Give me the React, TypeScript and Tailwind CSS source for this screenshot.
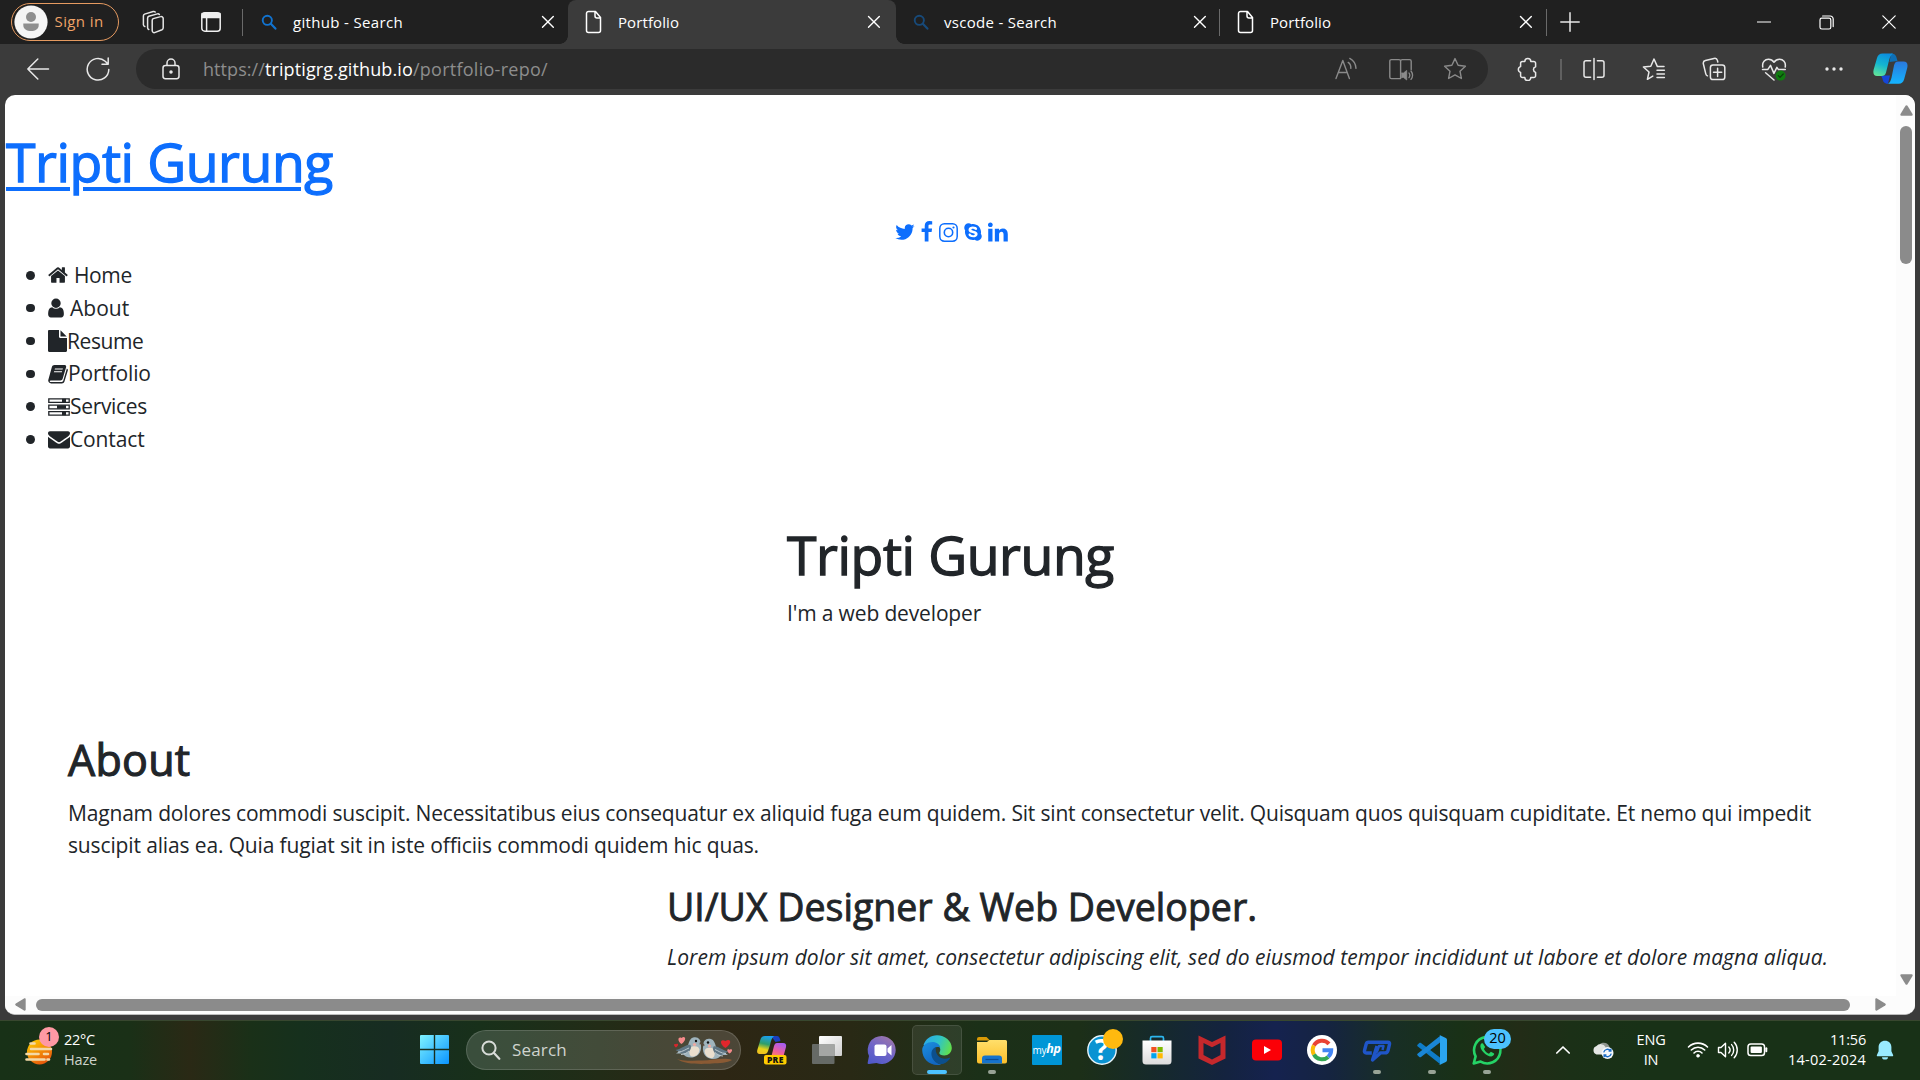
import React from "react";
import { FaSkype } from "react-icons/fa";

type P = { children: React.ReactNode; w?: number; h?: number; vb?: string; className?: string };

function Line({ children, w = 24, h = 24, vb, className = "" }: P) {
  return (
    <svg
      width={w}
      height={h}
      viewBox={vb ?? `0 0 ${w} ${h}`}
      fill="none"
      stroke="currentColor"
      strokeWidth={1.5}
      strokeLinecap="round"
      strokeLinejoin="round"
      className={`block shrink-0 ${className}`}
    >
      {children}
    </svg>
  );
}

function Fill({ children, w = 22, h = 22, vb = "0 0 1792 1792", className = "" }: P) {
  return (
    <svg width={w} height={h} viewBox={vb} fill="currentColor" className={`block shrink-0 ${className}`}>
      {children}
    </svg>
  );
}

/* ---------- Tab strip ---------- */

function Magnifier({ className }: { className: string }) {
  return (
    <Line w={16} h={16} className={className}>
      <circle cx="6.3" cy="6.3" r="4.6" strokeWidth="1.9" />
      <path d="M9.8 9.8 14.4 14.6" strokeWidth="2.2" />
    </Line>
  );
}

function PageIcon() {
  return (
    <Line w={18} h={24} className="text-white">
      <path d="M3.5 1.5h7l5 6v13a2 2 0 0 1-2 2h-10a2 2 0 0 1-2-2v-17a2 2 0 0 1 2-2zM10 1.5v4.6a2 2 0 0 0 2 2h3.5" />
    </Line>
  );
}

function CloseX() {
  return (
    <Line w={14} h={14} className="text-white">
      <path d="M1.5 1.5 12.3 12.3M12.3 1.5 1.5 12.3" strokeWidth="1.4" />
    </Line>
  );
}

function TabStrip() {
  return (
    <div className="flex h-[44px] items-center bg-[#202020] text-[15px] text-white">
      <div className="ml-[11px] mb-px flex h-[38px] w-[108px] shrink-0 items-center rounded-full border-[1.5px] border-[#e59a60] pl-[1.5px]">
        <svg width="34" height="34" viewBox="0 0 34 34" className="block shrink-0">
          <circle cx="17" cy="17" r="16.6" fill="#f5f5f5" />
          <circle cx="17" cy="12" r="5" fill="#8f8f8f" />
          <path d="M9.3 18.5h15.4v1.6c0 4-3.4 6-7.7 6s-7.7-2-7.7-6z" fill="#8f8f8f" />
        </svg>
        <span className="ml-[7px] tracking-[0.027em] whitespace-nowrap text-[#f0a368]">Sign in</span>
      </div>
      <Line w={24} h={24} className="ml-[23px] text-[#e6e6e6]">
        <path d="M11.2 8.6 18.6 6.6a2 2 0 0 1 2.6 1.8v9.4a2 2 0 0 1-1.2 1.9l-7.4 2.9a2 2 0 0 1-2.4-1.8v-10.4a2 2 0 0 1 1-1.8z" />
        <path d="M6.8 19.5a2 2 0 0 1-1.2-1.8V8.2a2 2 0 0 1 1.2-1.9l8.6-2.4a2 2 0 0 1 2 .6" />
        <path d="M2.8 16.5a2 2 0 0 1-1.4-1.8V6a2 2 0 0 1 1.2-1.9l8.6-2.6a2 2 0 0 1 2 .5" />
      </Line>
      <Line w={22} h={22} className="ml-[34px] text-[#f0f0f0]">
        <rect x="1.8" y="1.8" width="18.4" height="18.4" rx="3" />
        <path d="M2 2.5h18v4H2z" fill="currentColor" />
        <path d="M6.6 7v13" />
      </Line>
      <div className="ml-[20px] h-[27px] w-px bg-[#6a6a6a]" />
      <Magnifier className="ml-[18px] text-[#1173d0]" />
      <span className="ml-[16px] w-[248px] shrink-0 tracking-[0.022em] whitespace-nowrap">github - Search</span>
      <CloseX />

      <div className="relative ml-[13px] flex h-[44px] w-[328px] shrink-0 items-center rounded-t-[8px] bg-[#3b3b3b] before:absolute before:bottom-0 before:-left-[8px] before:size-[8px] before:bg-[radial-gradient(circle_at_0_0,#202020_7.5px,#3b3b3b_8px)] after:absolute after:bottom-0 after:-right-[8px] after:size-[8px] after:bg-[radial-gradient(circle_at_100%_0,#202020_7.5px,#3b3b3b_8px)]">
        <div className="ml-[17px]"><PageIcon /></div>
        <span className="ml-[15px] w-[249px] shrink-0 tracking-[0.006em]">Portfolio</span>
        <CloseX />
      </div>

      <Magnifier className="ml-[17px] text-[#174a7a]" />
      <span className="ml-[15px] w-[249px] shrink-0 tracking-[0.02em] whitespace-nowrap">vscode - Search</span>
      <CloseX />
      <div className="ml-[12px] h-[27px] w-px bg-[#6a6a6a]" />
      <div className="ml-[17px]"><PageIcon /></div>
      <span className="ml-[15px] w-[249px] shrink-0 tracking-[0.006em]">Portfolio</span>
      <CloseX />
      <div className="ml-[13px] h-[27px] w-px bg-[#6a6a6a]" />
      <Line w={20} h={20} className="ml-[13px] text-[#e8e8e8]">
        <path d="M10 .8v18.4M.8 10h18.4" />
      </Line>
      <div className="ml-auto grid w-[187px] shrink-0 grid-cols-3 place-items-center text-white">
        <Line w={14} h={14}><path d="M.5 7h13" strokeWidth="1.2" /></Line>
        <Line w={15} h={15}>
          <rect x="1" y="3.2" width="10.8" height="10.8" rx="1.8" strokeWidth="1.2" />
          <path d="M3.6 1h7.6a3 3 0 0 1 3 3v7.6" strokeWidth="1.2" />
        </Line>
        <Line w={14} h={14}><path d="M.8.8l12.4 12.4M13.2.8.8 13.2" strokeWidth="1.2" /></Line>
      </div>
    </div>
  );
}

/* ---------- Address bar ---------- */

function Cell({ children, className = "w-[60px]" }: { children: React.ReactNode; className?: string }) {
  return <div className={`flex shrink-0 items-center justify-center ${className}`}>{children}</div>;
}

const star = "M12 1.6 15.1 8.3l7.3.9-5.4 5 1.4 7.3L12 17.9l-6.4 3.6L7 14.2l-5.4-5 7.3-.9z";

function Toolbar() {
  return (
    <div className="flex h-[51px] items-center bg-[#3b3b3b] pb-px text-[#e8e8e8]">
      <Line w={24} h={24} className="ml-[26px]"><path d="M22.5 12H1.8M11.8 2 1.8 12l10 10" /></Line>
      <Line w={24} h={24} className="ml-[36px]"><path d="M22.8 12.4a10.8 10.8 0 1 1-3.6-8.2l2.6 2.6M22.2 1v6.2h-6.2" /></Line>
      <div className="ml-[26px] flex h-[40px] w-[1352px] shrink-0 items-center rounded-full bg-[#2b2b2b]">
        <Line w={18} h={22} className="ml-[26px]">
          <rect x="1" y="7.5" width="16" height="13.2" rx="2.4" />
          <path d="M5 7.3V5a4 4 0 0 1 8 0v2.3" />
          <circle cx="9" cy="14" r="1" fill="currentColor" />
        </Line>
        <div className="ml-[23px] flex text-[18px] whitespace-nowrap text-[#8d8d8d]">
          <span className="tracking-[0.004em]">https://</span>
          <span className="tracking-[0.006em] text-white">triptigrg.github.io</span>
          <span className="tracking-[0.015em]">/portfolio-repo/</span>
        </div>
        <div className="ml-auto flex pr-[7px] text-[#8a8a8a]">
          <Cell className="w-[54px]">
            <Line><path d="M2 21.5 8.8 3.5l6.6 18M4.4 15.5h8.8M14.2 5.4a6.5 6.5 0 0 1 2.6 6M15.8 1.4a12 12 0 0 1 6.2 10" strokeWidth="1.4" /></Line>
          </Cell>
          <Cell className="w-[55px]">
            <Line w={26}>
              <path d="M12.6 21.6H3.4a1.6 1.6 0 0 1-1.6-1.6V4.2a1.6 1.6 0 0 1 1.6-1.6h7.6a1.6 1.6 0 0 1 1.6 1.6v17.4M12.6 4.2a1.6 1.6 0 0 1 1.6-1.6h7.4a1.6 1.6 0 0 1 1.6 1.6v8.4" strokeWidth="1.4" />
              <path d="M13.5 16h2l3.2-2.6v9.6l-3.2-2.6h-2z" fill="currentColor" strokeWidth=".8" />
              <path d="M21 16a4 4 0 0 1 0 4.6M23 14a7 7 0 0 1 0 8.4" strokeWidth="1.3" />
            </Line>
          </Cell>
          <Cell className="w-[53px]"><Line><path d={star} strokeWidth="1.4" /></Line></Cell>
        </div>
      </div>
      <Cell className="ml-[10px] w-[60px]">
        <Line><path d="M8 4.4h.8a3 3 0 0 1 6 0h3a1.800 1.800 0 0 1 1.800 1.800v3.600a2.900 2.900 0 0 0 0 5.600v3.400a1.800 1.800 0 0 1-1.800 1.800h-3a3 3 0 0 1-6 0H6.400a1.800 1.800 0 0 1-1.800-1.800V15.400a3 3 0 0 1 0-5.800V6.200a1.800 1.800 0 0 1 1.800-1.800z" /></Line>
      </Cell>
      <div className="ml-[2px] h-[21px] w-[1.5px] bg-[#606060]" />
      <Cell className="ml-[2px] w-[60px]">
        <Line><path d="M8.6 3.8H4a2 2 0 0 0-2 2v12.4a2 2 0 0 0 2 2h4.6M15.4 3.8H20a2 2 0 0 1 2 2v12.4a2 2 0 0 1-2 2h-4.6M12 1.4v21.2" /></Line>
      </Cell>
      <Cell><Line><path d="M22 9.6h-6.6L12 2 8.8 9.2 1.4 10l5.6 5-1.6 7.3 5.4-3.2M15 13.2h7.4M15 17h7.4M15 20.6h7.4" /></Line></Cell>
      <Cell>
        <Line>
          <rect x="8.4" y="8" width="14.4" height="14.6" rx="2.6" />
          <path d="M15.6 11.2v8.2M11.5 15.3h8.2M5.4 18.8a3 3 0 0 1-1.6-2L1.4 7a2.8 2.8 0 0 1 2-3.4L12 1.4a2.8 2.8 0 0 1 3.4 2l.4 1.6" />
        </Line>
      </Cell>
      <Cell>
        <Line w={26}>
          <path d="M1.800 10c-1-5 2.400-7.800 5.600-7.800 2.400 0 4.200 1 5.600 3 1.400-2 3.200-3 5.600-3 3.200 0 6.600 2.800 5.600 7.800M1.500 12.400h5.400l2.600-4 3.400 8 3-6 1.400 2h7M4.600 15.800 13 23" />
          <circle cx="19.600" cy="18.600" r="5" fill="#107c10" stroke="none" />
          <path d="m17.300 18.700 1.700 1.700 3.200-3.400" stroke="#0a3d0a" strokeWidth="1.200" />
        </Line>
      </Cell>
      <Cell>
        <Fill w={20} h={6} vb="0 0 20 6"><circle cx="3" cy="3" r="1.700" /><circle cx="10" cy="3" r="1.700" /><circle cx="17" cy="3" r="1.700" /></Fill>
      </Cell>
      <div className="ml-[9px] -mt-px">
        <svg width="35" height="31" viewBox="0 0 35 31" className="block">
          <defs>
            <linearGradient id="cpA" x1=".6" y1="0" x2=".3" y2="1"><stop offset="0" stopColor="#0b8fe0" /><stop offset=".5" stopColor="#14b6d0" /><stop offset="1" stopColor="#5fe39a" /></linearGradient>
            <linearGradient id="cpB" x1=".5" y1="0" x2=".5" y2="1"><stop offset="0" stopColor="#2a78dd" /><stop offset="1" stopColor="#14b4ff" /></linearGradient>
          </defs>
          <path d="M8 22.500h9l-2 8.300c-4 0-5-2.500-5.500-5z" fill="#1546d8" />
          <path d="M18 .5c5 0 5.500 3.500 6.500 7.500l-8 1z" fill="#0e6fb5" />
          <path d="M9.500.500H20c-3 2-3.500 5-4.500 9l-2.500 10c-.8 2.600-2 3.500-4.500 3.500H4c-3 0-4.300-2.200-3.300-6.500L4 5C4.900 2 6.500.500 9.500.500z" fill="url(#cpA)" />
          <path d="M25 8.500h5.500c3.500 0 4.600 2.500 3.700 6.500l-3 11c-1 3.300-2.500 4.700-5.500 4.700H15c2-1.200 2.700-3 3.500-6L21 12.500c.8-2.800 1.500-4 4-4z" fill="url(#cpB)" />
        </svg>
      </div>
    </div>
  );
}

/* ---------- Web page ---------- */

const faHome = (
  <Fill w={20} vb="64 0 1664 1792" className="mr-[6px]">
    <path d="M1472 992v480q0 26-19 45t-45 19h-384v-384h-256v384h-384q-26 0-45-19t-19-45v-480q0-1 .5-3t.5-3l575-474 575 474q1 2 1 6zm223-69l-62 74q-8 9-21 11h-3q-13 0-21-7l-692-577-692 577q-12 8-24 7-13-2-21-11l-62-74q-8-10-7-23.500t11-21.500l719-599q32-26 76-26t76 26l244 204v-195q0-14 9-23t23-9h192q14 0 23 9t9 23v408l219 182q10 8 11 21.500t-7 23.500z" />
  </Fill>
);
const faUser = (
  <Fill w={16} vb="256 0 1280 1792" className="mr-[6px]">
    <path d="M1536 1399q0 109-62.500 187t-150.500 78h-854q-88 0-150.500-78t-62.500-187q0-85 8.500-160.500t31.500-152 58.500-131 94-89 134.500-34.500q131 128 313 128t313-128q76 0 134.500 34.500t94 89 58.500 131 31.500 152 8.500 160.500zm-256-887q0 159-112.500 271.500t-271.500 112.500-271.500-112.500-112.500-271.500 112.500-271.500 271.500-112.500 271.500 112.500 112.500 271.500z" />
  </Fill>
);
const faFile = (
  <Fill w={19} h={22} vb="0 0 19 22">
    <path d="M0 1.200C0 .5.500 0 1.200 0H11v6.800c0 .7.500 1.200 1.200 1.200H19v12.800c0 .7-.5 1.200-1.200 1.200H1.200C.5 22 0 21.500 0 20.800zM12.500.200 18.700 6.400h-6.200z" />
  </Fill>
);
const faBook = (
  <Fill w={20} h={20} vb="0 0 21 20">
    <path
      fillRule="evenodd"
      d="M6.800.600h10.400c1.500 0 2.200 1 1.800 2.400l-3.600 12c-.4 1.200-1.200 1.800-2.400 1.800H3c-.8 0-1.200.2-1.200.7 0 .6.700.9 1.500.9h11.200c.8 0 1.300-.4 1.500-1.200L19.800 4.200c1 .5 1.300 1.300 1 2.200l-3.500 11.400c-.4 1.300-1.500 2.100-2.700 2.100H3.300C1.300 19.900-.200 18.100.300 16.200L4 2.800C4.400 1.300 5.400.600 6.800.600zM7.300 4.200 7 5.400h8.300l.4-1.200zM6.500 7l-.4 1.200h8.400l.3-1.200z"
    />
  </Fill>
);
const faTasks = (
  <svg width="22" height="18" viewBox="0 0 22 18" className="block shrink-0" fill="none" stroke="currentColor" strokeWidth="1.300">
    <path d="M.8.800h20.400v3.600H.8zM.8 7.200h20.400v3.600H.8zM.8 13.600h20.400v3.600H.8z" />
    <path d="M14 .8h4v3.600h-4zM9 7.200h9v3.600H9zM14 13.600h4v3.600h-4z" fill="currentColor" stroke="none" />
  </svg>
);
const faEnvelope = (
  <Fill>
    <path d="M1792 710v794q0 66-47 113t-113 47h-1472q-66 0-113-47t-47-113v-794q44 49 101 87 362 246 497 345 57 42 92.500 65.500t94.500 48 110 24.500h2q51 0 110-24.500t94.500-48 92.500-65.500q170-123 498-345 57-39 100-87zm0-294q0 79-49 151t-122 123q-376 261-468 325-10 7-42.500 31t-54 38.500-52 32.500-57.500 27-50 9h-2q-23 0-50-9t-57.500-27-52-32.500-54-38.500-42.500-31q-91-64-262-182.500t-205-142.500q-62-42-117-115.500t-55-136.500q0-78 41.500-130t118.500-52h1472q65 0 112.500 47t47.500 113z" />
  </Fill>
);

function NavRow({ icon, children }: { icon: React.ReactNode; children: React.ReactNode }) {
  return (
    <li className="flex h-[32.800px] items-center">
      <span className="mr-[13.500px] size-[8.500px] rounded-full bg-[#212529]" />
      {icon}
      {children}
    </li>
  );
}

function WebPage() {
  return (
    <div className="flex h-[901px] w-[1891px] flex-col text-[21px] leading-[33px] text-[#212529]">
      <h1 className="mt-[34px] h-[66px] text-[53.500px] leading-[66px] tracking-[-0.0076em] text-[#0d6efd] [-webkit-text-stroke:1.300px_#0d6efd]">
        <span className="ml-px underline decoration-[4px] underline-offset-[5px]">Tripti Gurung</span>
      </h1>
      <div className="mt-[20px] ml-[2px] flex h-[33px] items-center justify-center text-[#0d6efd]">
        <Fill w={20} h={22} vb="80 0 1640 1792">
          <path d="M1684 408q-67 98-162 167 1 14 1 42 0 130-38 259.500t-115.500 248.500-184.500 210.500-258 146-323 54.500q-271 0-496-145 35 4 78 4 225 0 401-138-105-2-188-64.500t-114-159.500q33 5 61 5 43 0 85-11-112-23-185.500-111.500t-73.500-205.500v-4q68 38 146 41-66-44-105-115t-39-154q0-88 44-163 121 149 294.500 238.500t371.500 99.500q-8-38-8-74 0-134 94.500-228.500t228.500-94.500q140 0 236 102 109-21 205-78-37 115-142 178 93-10 186-50z" />
        </Fill>
        <Fill w={13} h={22} vb="440 0 1040 1792" className="ml-[6px]">
          <path d="M1343 12v264h-157q-86 0-116 36t-30 108v189h293l-39 296h-254v759h-306v-759h-255v-296h255v-218q0-186 104-288.500t277-102.500q147 0 228 12z" />
        </Fill>
        <Line w={19} h={19} className="ml-[5px] mt-px">
          <rect x=".8" y=".8" width="17.400" height="17.400" rx="4.600" />
          <circle cx="9.500" cy="9.500" r="4.200" strokeWidth="1.600" />
          <circle cx="14.500" cy="4.500" r="1.100" fill="currentColor" stroke="none" />
        </Line>
        <FaSkype className="mt-px ml-[5px] size-[20px]" />
        <Fill w={20} h={20} vb="130 100 1550 1550" className="ml-[5px]">
          <path d="M477 625v991h-330v-991h330zm21-306q1 73-50.500 122t-135.500 49h-2q-82 0-132-49t-50-122q0-74 51.500-122.500t134.500-48.500 133 48.500 51 122.500zm1166 729v568h-329v-530q0-105-40.500-164.500t-126.500-59.500q-63 0-105.500 34.500t-63.500 85.500q-11 30-11 81v553h-329q2-399 2-647t-1-296l-1-48h329v144h-2q20-32 41-56t56.500-52 87-43.500 114.500-15.500q171 0 275 113.500t104 332.500z" />
        </Fill>
      </div>
      <ul className="mt-[11px] ml-[21px]">
        <NavRow icon={faHome}><span className="tracking-[-0.018em]">Home</span></NavRow>
        <NavRow icon={faUser}><span>About</span></NavRow>
        <NavRow icon={faFile}><span className="tracking-[-0.020em]">Resume</span></NavRow>
        <NavRow icon={faBook}><span className="tracking-[-0.008em]">Portfolio</span></NavRow>
        <NavRow icon={faTasks}><span className="tracking-[-0.015em]">Services</span></NavRow>
        <NavRow icon={faEnvelope}><span className="tracking-[-0.006em]">Contact</span></NavRow>
      </ul>
      <div className="mt-[66.200px] ml-[782px]">
        <h1 className="text-[53.500px] leading-[66px] tracking-[-0.0076em] [-webkit-text-stroke:1.300px_#212529]">Tripti Gurung</h1>
        <p className="mt-[9px] tracking-[-0.007em]">I'm a web developer</p>
      </div>
      <section className="mt-[103px] ml-[63px]">
        <h2 className="text-[43px] leading-[53px] tracking-[0.006em] [-webkit-text-stroke:1.100px_#212529]">About</h2>
        <p className="mt-[11px] leading-[32.500px] whitespace-nowrap">
          <span className="tracking-[-0.0084em]">
            Magnam dolores commodi suscipit. Necessitatibus eius consequatur ex aliquid fuga eum quidem. Sit sint consectetur velit. Quisquam quos quisquam cupiditate. Et nemo qui impedit
          </span>
          <br />
          <span className="tracking-[-0.0064em]">suscipit alias ea. Quia fugiat sit in iste officiis commodi quidem hic quas.</span>
        </p>
        <div className="mt-[22px] ml-[599px]">
          <h3 className="text-[37.500px] leading-[46px] [-webkit-text-stroke:0.900px_#212529]">UI/UX Designer &amp; Web Developer.</h3>
          <p className="mt-[11px] tracking-[0.0035em] whitespace-nowrap italic">
            Lorem ipsum dolor sit amet, consectetur adipiscing elit, sed do eiusmod tempor incididunt ut labore et dolore magna aliqua.
          </p>
        </div>
      </section>
    </div>
  );
}

function Viewport() {
  return (
    <div className="h-[925px] bg-[#3b3b3b] px-[5px] pb-[5px]">
      <div className="flex h-[920px] flex-col overflow-hidden rounded-[10px] border-b border-[#bdbdbd] bg-white">
        <div className="flex h-[901px]">
          <WebPage />
          <div className="flex w-[19px] shrink-0 flex-col items-center bg-[#fcfcfc] pt-[10px] pl-px">
            <Fill w={13} h={11} vb="0 0 13 11" className="text-[#8b8b8b]"><path d="M5.500.8c.5-.8 1.500-.8 2 0l5 8.200c.5.900.1 1.700-.9 1.700H1.400C.4 10.700 0 9.900.5 9z" /></Fill>
            <div className="mt-[10px] h-[138px] w-[12px] rounded-full bg-[#8b8b8b]" />
            <Fill w={13} h={11} vb="0 0 13 11" className="mt-auto mb-[11px] text-[#8b8b8b]"><path d="M5.500 10.200c.5.800 1.500.8 2 0l5-8.200C13 1.100 12.600.3 11.600.3H1.400C.4.300 0 1.100.5 2z" /></Fill>
          </div>
        </div>
        <div className="flex h-[18px] items-center bg-[#fcfcfc] pb-px text-[#8b8b8b]">
          <Fill w={11} h={13} vb="0 0 11 13" className="ml-[10px]"><path d="M.8 5.500c-.8.500-.8 1.500 0 2l8.200 5c.9.500 1.700.1 1.700-.9V1.400c0-1-.8-1.400-1.700-.9z" /></Fill>
          <div className="ml-[10px] h-[12px] w-[1814px] rounded-full bg-[#8b8b8b]" />
          <Fill w={11} h={13} vb="0 0 11 13" className="ml-[25px]"><path d="M10.200 5.500c.8.500.8 1.500 0 2l-8.200 5c-.9.500-1.700.1-1.700-.9V1.400C.3.400 1.100 0 2 .5z" /></Fill>
        </div>
      </div>
    </div>
  );
}

/* ---------- Taskbar ---------- */

function Gradients() {
  return (
    <svg width="0" height="0" className="absolute">
      <defs>
        <linearGradient id="sun" x1="0" y1="0" x2=".6" y2="1"><stop offset="0" stopColor="#ffd400" /><stop offset="1" stopColor="#e8590c" /></linearGradient>
        <linearGradient id="win" gradientUnits="userSpaceOnUse" x1="0" y1="0" x2="29" y2="29"><stop offset="0" stopColor="#7ff3ff" /><stop offset="1" stopColor="#0a94ff" /></linearGradient>
        <linearGradient id="preA" x1=".6" y1="0" x2=".4" y2="1"><stop offset="0" stopColor="#1aa0f0" /><stop offset=".45" stopColor="#2f9e6a" /><stop offset=".75" stopColor="#e8d21a" /><stop offset="1" stopColor="#f0c020" /></linearGradient>
        <linearGradient id="preB" x1=".7" y1="0" x2=".3" y2="1"><stop offset="0" stopColor="#a55cf5" /><stop offset=".6" stopColor="#f0609a" /><stop offset="1" stopColor="#ff8a5c" /></linearGradient>
        <linearGradient id="chat" x1=".8" y1="0" x2=".2" y2="1"><stop offset="0" stopColor="#a077a8" /><stop offset=".5" stopColor="#7065c8" /><stop offset="1" stopColor="#5059c9" /></linearGradient>
        <linearGradient id="edgeA" x1="0" y1=".3" x2="1" y2=".6"><stop offset="0" stopColor="#2aa9e8" /><stop offset=".5" stopColor="#2fc3c8" /><stop offset="1" stopColor="#62e04a" /></linearGradient>
        <linearGradient id="edgeB" x1="0" y1="0" x2=".5" y2="1"><stop offset="0" stopColor="#1b8fe0" /><stop offset="1" stopColor="#1266c0" /></linearGradient>
        <linearGradient id="fold" x1="0" y1="0" x2="0" y2="1"><stop offset="0" stopColor="#ffdf6b" /><stop offset="1" stopColor="#fcbf2a" /></linearGradient>
        <linearGradient id="store" x1="0" y1="0" x2="0" y2="1"><stop offset="0" stopColor="#ffffff" /><stop offset="1" stopColor="#dcdcdc" /></linearGradient>
        <linearGradient id="tv" x1="0" y1="0" x2="1" y2="1"><stop offset="0" stopColor="#ffffff" /><stop offset="1" stopColor="#cfcfcf" /></linearGradient>
      </defs>
    </svg>
  );
}

function Bird() {
  return (
    <g>
      <path d="M2 24 14 16c1-4 2-7 5-8 5-1.500 8 2 7.500 6 2 6-1 13-8 14-5 .5-8-1.500-10-4z" fill="#9fb4bd" />
      <path d="M18 17c4-1 7 0 7.500 3-.5 5-4 7.500-8 7-3-1-3-8 .5-10z" fill="#eadfce" />
      <path d="M1.500 20.500c7-1 10-6 15-5 2 4-2 9-8 8.500z" fill="#5f7684" />
      <path d="M4 22.500c5 0 8-3 11-4M7 25c4 0 6-2 8-3.500" stroke="#c5d1d6" strokeWidth=".9" fill="none" />
      <circle cx="22" cy="11.500" r="1.200" fill="#111" />
      <circle cx="20.500" cy="15" r="1.600" fill="#f0a8a0" />
      <path d="m26 12.500 2.500 1.500-3 1z" fill="#5a4a3a" />
    </g>
  );
}

function Birds() {
  return (
    <svg width="60" height="30" viewBox="0 0 60 30" className="block shrink-0">
      <path d="M4 24c8 3 15 1 24 1.500S50 22 59 25c-5 3-12 3-20 3.500S12 30 4 24z" fill="#8a5a34" />
      <g transform="translate(1 -5.500)"><Bird /></g>
      <g transform="translate(57 -4) scale(-1 1)"><Bird /></g>
      <path d="M6.500 10.500c-5-3.500-3-8 0-6 3-3 6.500 1 0 6z" transform="translate(2 -1.500)" fill="#f58a8a" />
      <path d="M3 12.500c-3-2-2-4.500 0-3.200 2-1.500 3.500 1 0 3.200z" fill="#d8262c" />
      <path d="M52.500 13c-7-4.500-5-10 0-7 5-3 7.500 2 0 7z" fill="#e0262c" />
      <path d="M56.500 18.500c-3.500-2.500-2.500-5.500 0-3.800 2.800-1.700 4 1.300 0 3.800z" fill="#f58a8a" />
    </svg>
  );
}

function App55({ children, run }: { children: React.ReactNode; run?: boolean }) {
  return (
    <div className="relative flex h-[60px] w-[55px] shrink-0 items-center justify-center">
      {children}
      {run && <span className="absolute bottom-[6px] h-[4px] w-[8px] rounded-full bg-[#98a396]" />}
    </div>
  );
}

function Ico({ children }: { children: React.ReactNode }) {
  return <svg width="30" height="30" viewBox="0 0 30 30" className="block shrink-0 overflow-visible">{children}</svg>;
}

function Taskbar() {
  return (
    <div className="flex h-[60px] items-center border-t border-[#38472f] bg-[linear-gradient(90deg,#183117_0px,#1a3017_130px,#2a2915_190px,#1a3018_250px,#16301d_300px,#172c22_390px,#18301a_480px,#222c17_600px,#2d2614_720px,#292915_850px,#1b3018_980px,#1c2f18_1080px,#162a2a_1150px,#14233f_1225px,#15224f_1275px,#152440_1330px,#182e26_1390px,#193117_1460px,#222c17_1520px,#1b3017_1570px,#183117_1640px,#183117_1920px)] pb-[2px] text-[14.500px] text-white">
      <Gradients />
      <div className="flex w-[420px] shrink-0 items-center">
        <div className="relative ml-[24px] size-[34px]">
          <svg width="34" height="40" viewBox="0 0 34 40" className="block">
            <circle cx="15.500" cy="19" r="12.500" fill="url(#sun)" />
            <g stroke="#f3d9a8" strokeWidth="2.600" strokeLinecap="round">
              <path d="M6.500 10.500h4M7 16h20M2.500 21h12M20 21h4M2.500 26.500h18M23.500 26.500h1.500" />
            </g>
          </svg>
          <span className="absolute -top-[6px] left-[15px] flex size-[20px] items-center justify-center rounded-full bg-[#ff99a4] text-[13px] leading-none text-black">1</span>
        </div>
        <div className="ml-[6px] leading-[20px]">
          <div className="tracking-[-0.016em]">22°C</div>
          <div className="tracking-[-0.012em] text-[#cdd3cb]">Haze</div>
        </div>
      </div>
      <div className="flex w-[1094px] shrink-0 items-center">
        <svg width="29" height="29" viewBox="0 0 29 29" className="block shrink-0" fill="url(#win)">
          <path d="M0 1a1 1 0 0 1 1-1h12.800v13.800H0zM15.200 0H28a1 1 0 0 1 1 1v12.800H15.200zM0 15.200h13.800V29H1a1 1 0 0 1-1-1zM15.200 15.200H29V28a1 1 0 0 1-1 1H15.200z" />
        </svg>
        <div className="ml-[17px] flex h-[40px] w-[275px] items-center rounded-full border border-white/15 bg-white/15 text-[17px]">
          <Line w={20} h={20} className="ml-[14px] text-[#d8dcd8]">
            <circle cx="8" cy="8" r="6.600" strokeWidth="2" /><path d="m13 13 5.300 5.800" strokeWidth="2.200" />
          </Line>
          <span className="ml-[11px] grow tracking-[0.011em] text-[#cfd4ce]">Search</span>
          <div className="mr-[7px]"><Birds /></div>
        </div>
        <div className="ml-[3px] flex">
          <App55>
            <Ico>
              <path d="M14 1h6c2 0 3 2 3.500 5l-5 1z" fill="#1a3fc0" />
              <path d="M8 1h9c-2.500 2-3 5-4 9l-2 6c-.6 2-1.500 3-3.500 3H2.500C.5 19-.3 17.500.3 15l3-10C4 2.500 5.500 1 8 1z" fill="url(#preA)" />
              <path d="M20 8h6c2.500 0 3.500 1.500 3 4l-3 11H14l3-12c.6-2 1.500-3 3-3z" fill="url(#preB)" />
              <rect x="7" y="20" width="22.500" height="9.500" rx="2" fill="#ffcc00" />
              <text x="18.300" y="27.800" textAnchor="middle" fontSize="8.500" fontWeight="800" letterSpacing=".3" fill="#111">PRE</text>
            </Ico>
          </App55>
          <App55>
            <Ico><rect x="7" y="1" width="23" height="20" rx="1" fill="url(#tv)" /><rect x="0" y="9" width="22.500" height="20" rx="1" fill="#666a66" /><rect x="7" y="9" width="15.500" height="12" fill="#a4a6a4" /></Ico>
          </App55>
          <App55>
            <Ico>
              <path d="M15 1a14 14 0 1 1-5.500 27L2 29a1.200 1.200 0 0 1-1.300-1.500L2 21A14 14 0 0 1 15 1z" fill="url(#chat)" />
              <rect x="7.500" y="9.500" width="12" height="11.500" rx="2" fill="#fff" />
              <path d="M20.500 13.500 24.500 10v10.500l-4-3.500z" fill="#fff" />
            </Ico>
          </App55>
          <App55>
            <div className="flex size-[50px] items-center justify-center rounded-[5px] border border-white/10 bg-white/8">
              <Ico>
                <path d="M1.500 10C3.500 4 8.500.2 15 .2 23 .2 29.800 6 29.800 13c0 4.500-3.500 7.500-7.500 7.500-3 0-5-1-5-2.500 0-.8 1-1.500 1-3.500 0-3-3-5.500-7-5.500S3.500 11 1.500 10z" fill="url(#edgeA)" />
                <path d="M.2 15C.2 10 5 7 10.500 7c4 0 7.500 2.500 7.800 5.500-4.500-1.500-8 1.500-8 6 0 5.500 4 10 9 11-10 2.500-19.100-4.500-19.100-14.500z" fill="url(#edgeB)" />
                <path d="M14 12c-6 2-5.500 9.500-2 13.500 3 3.500 7 4.200 9.500 3.200 3-1.200 5-3 6.500-5.200.3-.6-.2-1-.8-.7C21 26 12 21 14 12z" fill="#0c4f8c" />
              </Ico>
            </div>
            <span className="absolute bottom-[6px] h-[4px] w-[20px] rounded-full bg-[#4cc2ff]" />
          </App55>
          <App55 run>
            <Ico>
              <path d="M0 4a2 2 0 0 1 2-2h7.500l3.500 3.500H0z" fill="#d99a06" />
              <path d="M0 7h10l2.500-2H28.500A1.500 1.500 0 0 1 30 6.500v20a2 2 0 0 1-2 2H2a2 2 0 0 1-2-2z" fill="url(#fold)" />
              <path d="M5 28.500v-5a3 3 0 0 1 3-3h14a3 3 0 0 1 3 3v5z" fill="#1673cc" /><path d="M8.500 24.500h13" stroke="#0b4c94" strokeWidth="1.200" />
            </Ico>
          </App55>
          <App55>
            <div className="flex size-[30px] items-center justify-center rounded-[1px] bg-[#0096d6] text-[10px] leading-none tracking-[-0.03em] text-white">
              my<b className="text-[12.500px] italic">hp</b>
            </div>
          </App55>
          <App55>
            <Ico>
              <circle cx="15" cy="15" r="14.200" fill="#0a93d2" stroke="#e8f4fa" strokeWidth="1.400" />
              <text x="14.500" y="25" textAnchor="middle" fontSize="28" fontWeight="700" fill="#fff">?</text>
              <circle cx="26" cy="4" r="10" fill="#ffb90f" />
            </Ico>
          </App55>
          <App55>
            <Ico>
              <path d="M8.500 6V3.200a1.500 1.500 0 0 1 1.500-1.500h10a1.500 1.500 0 0 1 1.500 1.500V6" fill="none" stroke="#2cb6ee" strokeWidth="1.700" />
              <path d="M.5 5.500h29V26a3.500 3.500 0 0 1-3.500 3.500H4A3.500 3.500 0 0 1 .5 26z" fill="url(#store)" />
              <path d="M9.300 12h5.200v5.200H9.300z" fill="#f25022" /><path d="M15.500 12h5.200v5.200h-5.200z" fill="#7fba00" /><path d="M9.300 18.200h5.200v5.200H9.300z" fill="#00a4ef" /><path d="M15.500 18.200h5.200v5.200h-5.200z" fill="#ffb900" />
            </Ico>
          </App55>
          <App55>
            <Ico><path fillRule="evenodd" d="M1.500.500 15 7 28.500.500V23.500L15 30 1.500 23.500zM6.500 8v12L15 24.500l8.500-4.500V8L15 12.300z" fill="#c5282c" /></Ico>
          </App55>
          <App55>
            <Ico><rect x="0" y="4.500" width="30" height="21" rx="4" fill="#fb0007" /><path d="M12 11v8l7-4z" fill="#fff" /></Ico>
          </App55>
          <App55>
            <Ico>
              <circle cx="15" cy="15" r="15" fill="#fff" />
              <g fill="none" strokeWidth="4">
                <path d="M22 8.800A9.300 9.300 0 0 0 6.900 10.500" stroke="#ea4335" />
                <path d="M6.900 10.500a9.300 9.300 0 0 0 0 9" stroke="#fbbc05" />
                <path d="M6.900 19.500a9.300 9.300 0 0 0 14.300 2.400" stroke="#34a853" />
                <path d="M21.200 21.900a9.300 9.300 0 0 0 3-6.600H15.500" stroke="#4285f4" />
              </g>
            </Ico>
          </App55>
          <App55 run>
            <Ico>
              <g fill="none" stroke="#1f55c8" strokeWidth="3.400" strokeLinejoin="round">
                <path d="M14.500 7.300H6.500c-1.300 0-2 .5-2.300 1.700L2.500 15.500c-.4 1.500.3 2.500 1.800 2.500h5.500M13 7.300h13c1.300 0 1.800.8 1.500 2L26 15.500c-.4 1.500-1.500 2.400-3 2.400h-4.500l-8 7 4.500-14" />
                <path d="M12 18c2 0 3-1 3.500-2.500L17 11h4.500l-1 4" strokeWidth="2.400" />
              </g>
            </Ico>
          </App55>
          <App55 run>
            <Ico>
              <path d="M.5 9.800 2.300 8c.5-.4 1.200-.4 1.700 0L23 22.500V29L.5 11.300c-.5-.5-.5-1 0-1.500z" fill="#0f7cc8" />
              <path d="M.5 20.200 2.300 22c.5.400 1.200.4 1.700 0L23 7.500V1L.5 18.700c-.5.500-.5 1 0 1.500z" fill="#1a86d6" />
              <path d="M21.500.500c.5-.4 1-.4 1.600-.2l5.700 2.600c.8.400 1.200 1 1.200 1.800v20.600c0 .8-.4 1.400-1.200 1.800l-5.700 2.600c-.6.200-1.100.2-1.600-.2.800.4 1.500 0 1.500-1V1.500c0-1-.7-1.400-1.500-1z" fill="#2ba5f0" />
            </Ico>
          </App55>
          <App55 run>
            <Ico>
              <path d="M1.700 28.500 3.600 21.400A13.200 13.200 0 1 1 8.600 26.600z" fill="none" stroke="#25d366" strokeWidth="2.600" strokeLinejoin="round" />
              <path d="M11 8.500c-1-.8-2 0-2.500 1.200-1.500 4.500 6 12 10.800 11.800 1.700-.2 3.300-1.800 2.800-3l-3.200-1.800-2 2c-2-.8-4-2.700-5-4.800l1.300-1.800z" fill="#25d366" />
            </Ico>
            <span className="absolute top-[9px] left-[25px] flex h-[20px] w-[27px] items-center justify-center rounded-full bg-[#4cc2ff] text-[14.500px] leading-none text-black">20</span>
          </App55>
        </div>
      </div>
      <Line w={16} h={10} className="ml-[41px] text-white"><path d="M1.800 8 8 2l6.200 6" strokeWidth="1.700" /></Line>
      <svg width="22" height="20" viewBox="0 0 22 20" className="ml-[21px] block shrink-0">
        <path d="M8 4a6 6 0 0 1 9.500 3v5H8z" fill="#8f9690" />
        <path d="M4.500 14.500a4.500 4.500 0 0 1 0-8.500 5.500 5.500 0 0 1 9 1l-2 7.500z" fill="#e4e6e4" />
        <circle cx="15.500" cy="13" r="6" fill="#f4f8fc" />
        <path d="M11.700 12.300a4 4 0 0 1 7-1.500M19.300 13.700a4 4 0 0 1-7 1.500M18.900 8.700v2.300h-2.300M12.100 17.300V15h2.300" fill="none" stroke="#1a6bc4" strokeWidth="1.300" />
      </svg>
      <div className="ml-[21px] w-[32px] text-center leading-[20px] tracking-[-0.012em]">
        <div>ENG</div>
        <div>IN</div>
      </div>
      <Line w={22} h={18} className="ml-[20px] text-white">
        <path d="M1.500 6a13.500 13.500 0 0 1 19 0M4.300 9a9.500 9.500 0 0 1 13.400 0M7 12a5.500 5.500 0 0 1 8 0" strokeWidth="1.600" />
        <circle cx="11" cy="14.800" r="1.500" fill="currentColor" strokeWidth=".5" />
      </Line>
      <Line w={22} h={18} className="ml-[8px] text-white">
        <path d="M1.500 6.500v5H4l4.500 4.200V2.300L4 6.500z" strokeWidth="1.400" />
        <path d="M11.800 6a4.500 4.500 0 0 1 0 6M14.600 3.600a8 8 0 0 1 0 10.800M17.200 1.200a11.500 11.500 0 0 1 0 15.600" strokeWidth="1.400" />
      </Line>
      <Line w={22} h={14} className="ml-[8px] text-white">
        <rect x="1" y="1" width="16.500" height="11.500" rx="2.800" strokeWidth="1.500" />
        <rect x="3.600" y="3.600" width="11.300" height="6.300" rx="1" fill="currentColor" stroke="none" />
        <path d="M19.300 5.300v3" strokeWidth="2" />
      </Line>
      <div className="ml-auto text-right leading-[20px]">
        <div className="tracking-[-0.013em]">11:56</div>
        <div className="tracking-[0.016em]">14-02-2024</div>
      </div>
      <Fill w={18} h={20} vb="0 0 18 20" className="ml-[10px] mr-[26px] text-[#99ebff]">
        <path d="M9 .8c3.700 0 6.400 2.700 6.400 6.200v4.200l1.700 3.700c.3.700-.1 1.300-.8 1.300H1.700c-.7 0-1.100-.6-.8-1.300l1.700-3.700V7C2.600 3.500 5.300.800 9 .8zM6 17.300h6a3 2.300 0 0 1-6 0z" />
      </Fill>
    </div>
  );
}

export default function App() {
  return (
    <div className="flex h-[1080px] w-[1920px] flex-col overflow-hidden bg-[#3b3b3b] font-['Open_Sans',sans-serif]">
      <TabStrip />
      <Toolbar />
      <Viewport />
      <Taskbar />
    </div>
  );
}
